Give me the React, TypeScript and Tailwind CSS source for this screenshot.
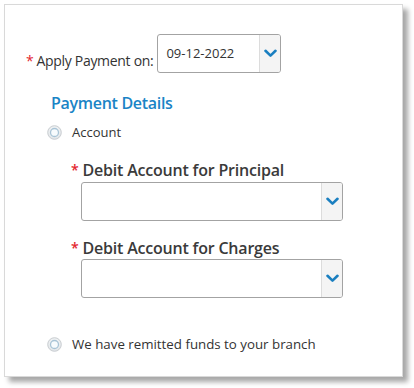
import React from "react";

function Radio() {
  return (
    <svg width="15" height="15" viewBox="0 0 15 15" className="shrink-0">
      <defs>
        <radialGradient id="rg" cx="50%" cy="40%" r="60%">
          <stop offset="0%" stopColor="#ffffff" />
          <stop offset="100%" stopColor="#dfe3e6" />
        </radialGradient>
      </defs>
      <circle cx="7.5" cy="7.5" r="6.8" fill="url(#rg)" stroke="#c9cdd1" strokeWidth="1" />
      <circle cx="7.5" cy="7.5" r="4" fill="#f7fbfd" stroke="#a9c4d6" strokeWidth="1.3" />
    </svg>
  );
}

function Chevron() {
  return (
    <svg width="13" height="9" viewBox="0 0 13 9">
      <path d="M1.5 1.8 L6.5 6.6 L11.5 1.8" fill="none" stroke="#1a7fc0" strokeWidth="2.6" strokeLinecap="round" strokeLinejoin="round" />
    </svg>
  );
}

function Select({ value, className }: { value?: string; className: string }) {
  return (
    <div className={"flex h-[39px] rounded-[3px] border border-[#a3a3a3] bg-white overflow-hidden " + className}>
      <div className="flex-1 flex items-center pl-[8px] text-[13px] text-[#333]">{value}</div>
      <div className="w-[21px] flex items-center justify-center bg-[#f4f4f4] border-l border-[#dcdcdc]">
        <Chevron />
      </div>
    </div>
  );
}

export default function App() {
  return (
    <div className="w-[414px] h-[388px] bg-white p-[4px]" style={{ fontFamily: '"Open Sans", "Noto Sans", sans-serif' }}>
      <div className="w-[399px] h-[373px] border border-[#d9d9d9] bg-white shadow-[5px_5px_5px_rgba(0,0,0,0.35)] flex flex-col">
        <div className="flex items-end pl-[21px] mt-[29px]">
          <div className="flex items-center pb-[2px] text-[14px] text-[#333] tracking-[-0.3px]">
            <span className="text-[#e3262e] mr-[3px]">*</span>
            <span>Apply Payment on:</span>
          </div>
          <Select value="09-12-2022" className="w-[124px] ml-[4px]" />
        </div>
        <div className="ml-[46px] mt-[20px] text-[16px] font-semibold text-[#1a84c6] leading-[20px] tracking-[-0.3px]">
          Payment Details
        </div>
        <div className="flex items-center ml-[42px] mt-[10px] text-[13px] text-[#333]">
          <Radio />
          <span className="ml-[10px]">Account</span>
        </div>
        <div className="ml-[66px] mt-[16px] flex items-center text-[16px] font-semibold text-[#3a3a3a] leading-[22px] tracking-[-0.2px]">
          <span className="text-[#e3262e] mr-[4px] text-[14px]">*</span>
          <span>Debit Account for Principal</span>
        </div>
        <Select className="ml-[76px] mt-[1px] w-[262px]" />
        <div className="ml-[66px] mt-[16px] flex items-center text-[16px] font-semibold text-[#3a3a3a] leading-[22px] tracking-[-0.2px]">
          <span className="text-[#e3262e] mr-[4px] text-[14px]">*</span>
          <span>Debit Account for Charges</span>
        </div>
        <Select className="ml-[76px] mt-[0px] w-[262px]" />
        <div className="flex items-center ml-[42px] mt-[37px] text-[13.3px] text-[#333]">
          <Radio />
          <span className="ml-[10px]">We have remitted funds to your branch</span>
        </div>
      </div>
    </div>
  );
}
